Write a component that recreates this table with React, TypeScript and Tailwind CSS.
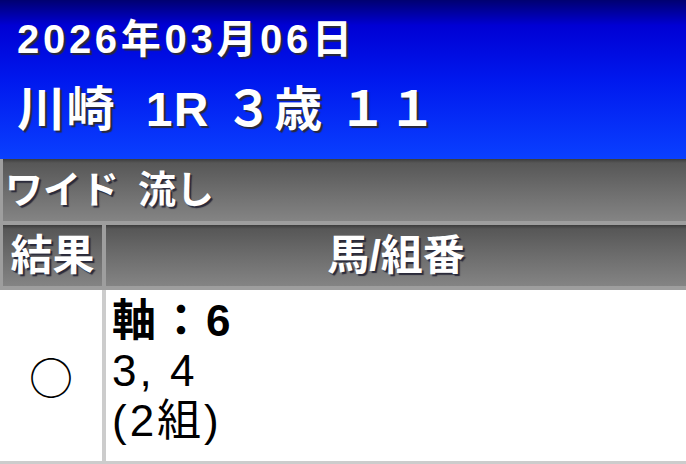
import React from 'react';

const font = "font-['Liberation_Sans','Noto_Sans_CJK_JP',sans-serif]";
const shadow = '[text-shadow:2px_2px_1px_#2a2a3a]';
const grayCell =
  'bg-[linear-gradient(to_bottom,#3c3c3c_0px,#575757_4px,#6a6a6a_45%,#848484_100%)] text-white font-bold';

const App: React.FC = () => {
  return (
    <div className={`w-[686px] h-[464px] overflow-hidden bg-white ${font}`}>
      {/* race header */}
      <div className="h-[159px] pl-[17px] pt-[19px] bg-[linear-gradient(to_bottom,#000070_0%,#0000d4_16%,#0018ee_50%,#0a40ff_100%)] text-white font-bold">
        <div className={`text-[40px] leading-none tracking-[3.7px] ${shadow}`}>2026年03月06日</div>
        <div className={`mt-[27px] text-[48px] leading-none tracking-[1.5px] whitespace-pre ${shadow}`}>川崎  1R ３歳 １１</div>
      </div>

      {/* table head */}
      <div className="bg-[#9e9e9e] pl-[3px] pb-[4px] flex flex-col gap-[4px]">
        <div className={`h-[62px] flex items-center pl-[2px] text-[38px] leading-none ${grayCell} ${shadow}`}>
          ワイド{'\u2002'}流し
        </div>
        <div className="h-[61px] flex gap-[4px]">
          <div className={`w-[99px] flex items-center justify-center text-[42px] leading-none ${grayCell} ${shadow}`}>
            結果
          </div>
          <div className={`flex-1 flex items-center justify-center text-[42px] leading-none ${grayCell} ${shadow}`}>
            馬/組番
          </div>
        </div>
      </div>

      {/* result row */}
      <div className="h-[174px] flex border-b-[3px] border-[#cccccc] text-black">
        <div className="w-[106px] flex items-center justify-center border-r-[4px] border-[#cccccc]">
          <span className="font-['Noto_Sans_CJK_JP',sans-serif] text-[44px] leading-none">○</span>
        </div>
        <div className="flex-1 pl-[6px] pt-[6px] text-[44px] leading-[50px] tracking-[3px]">
          <div className="font-bold">軸：6</div>
          <div>3, 4</div>
          <div>(2組)</div>
        </div>
      </div>
    </div>
  );
};

export default App;
